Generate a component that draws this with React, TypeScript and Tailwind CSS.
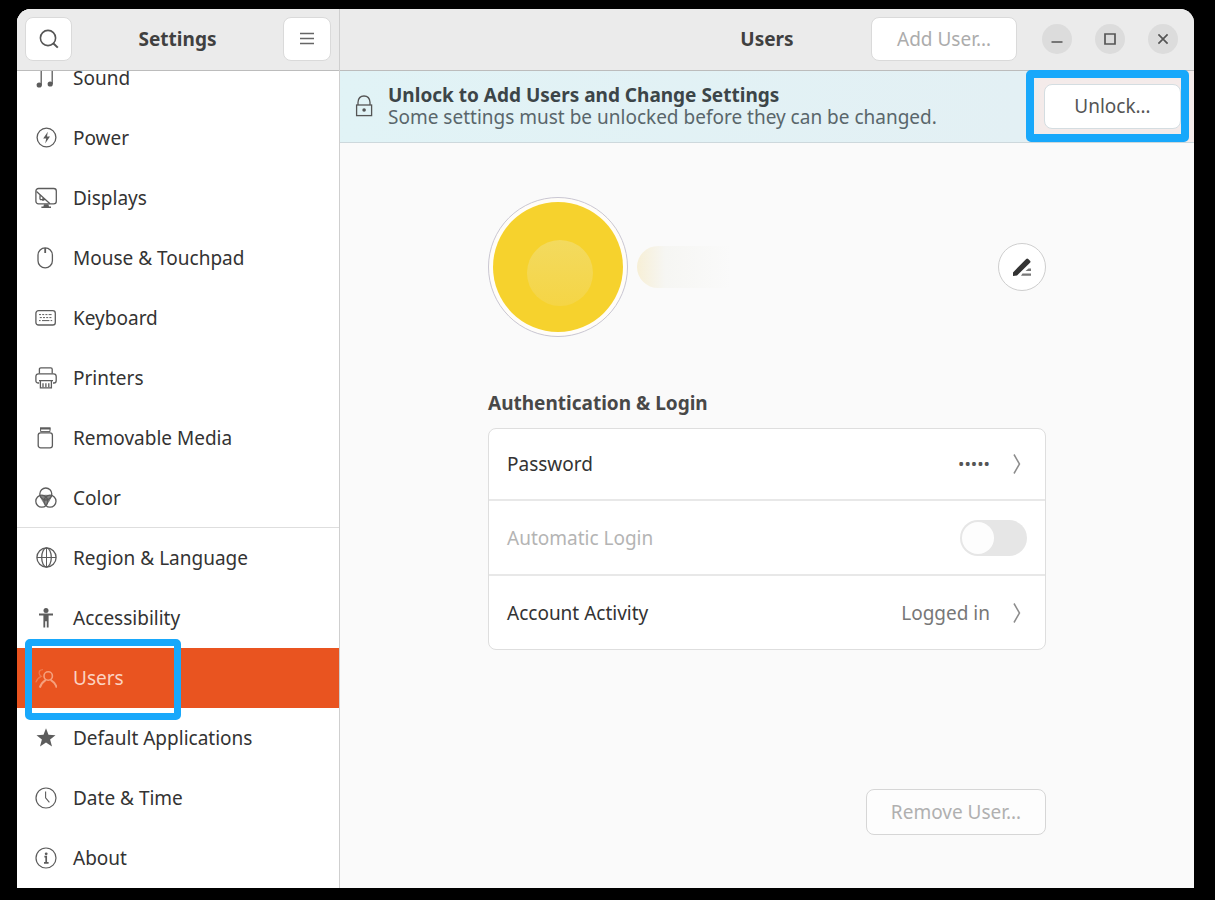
import type { ReactNode } from "react";

function Icon({ children, className = "" }: { children: ReactNode; className?: string }) {
  return (
    <svg
      viewBox="0 0 22 22"
      className={`size-[22px] shrink-0 ${className}`}
      fill="none"
      stroke="currentColor"
      strokeWidth="1.3"
      aria-hidden="true"
    >
      {children}
    </svg>
  );
}

const icons: Record<string, ReactNode> = {
  sound: (
    <>
      <path d="M6.2 18.5V3h11v14" />
      <circle cx="4.2" cy="18" r="2.6" fill="currentColor" stroke="none" />
      <circle cx="15.2" cy="17" r="2.6" fill="currentColor" stroke="none" />
    </>
  ),
  power: (
    <>
      <circle cx="11.5" cy="10.5" r="9.4" />
      <path d="M12.8 4.8 8.2 11.4h3l-1 5 4.8-6.8h-3z" fill="currentColor" stroke="none" />
    </>
  ),
  displays: (
    <>
      <rect x="0.9" y="1.5" width="20.4" height="15.4" rx="2.6" />
      <path d="M1.5 4.5 15 16.8M5 8.2v4.2M5 12.6h5M8 11v3" />
      <path d="M9 17.2h4.4l.6 2.2h2v1.6H6.4v-1.6h2z" fill="currentColor" stroke="none" />
    </>
  ),
  mouse: (
    <>
      <rect x="3" y="0.9" width="14.4" height="20" rx="7.2" />
      <path d="M10.2 1v5" strokeWidth="1.8" />
    </>
  ),
  keyboard: (
    <>
      <rect x="0.9" y="3.6" width="19.4" height="14.4" rx="2.6" />
      <path d="M4 7.6h2M7.2 7.6h2M10.4 7.6h2M13.6 7.6h3M4.8 10.6h2M8 10.6h2M11.2 10.6h2M14.4 10.6h2M4 13.6h1.6M7 13.6h7.4M15.6 13.6h1.6" strokeWidth="1" />
    </>
  ),
  printers: (
    <>
      <path d="M4.4 6.6V2.2Q4.4.9 5.8.9h10Q17.2.9 17.2 2.2v4.4" />
      <path d="M4.2 16H3.4Q.9 16 .9 13.4V9.6Q.9 6.8 3.6 6.8h15q2.6 0 2.6 2.8v3.8q0 2.6-2.4 2.6H18" />
      <path d="M4 13.6h14M5.4 14v6.8h11V14" />
      <path d="M8 16.2v4M10.9 16.2v4M13.8 16.2v4" />
    </>
  ),
  removable: (
    <>
      <path d="M5.6 1.4h9.4v3.2H5.6z" strokeWidth="1" />
      <path d="M5 1.4h10.6" strokeWidth="2.2" />
      <rect x="3.2" y="5.8" width="14.2" height="15" rx="2.4" />
    </>
  ),
  color: (
    <>
      <circle cx="10.8" cy="7" r="6" />
      <circle cx="6.8" cy="14.2" r="6" />
      <circle cx="15" cy="14.2" r="6" />
      <path d="M5.2 8.6q5.6-1.6 11.4 0-.6 5.4-5.7 9.4-5-3.6-5.7-9.4z" fill="currentColor" fillOpacity="0.75" stroke="none" />
    </>
  ),
  region: (
    <>
      <circle cx="11.5" cy="10.5" r="9.6" />
      <ellipse cx="11.5" cy="10.5" rx="4.8" ry="9.6" />
      <path d="M2 10.5h19M11.5 1v19" strokeWidth="1" />
    </>
  ),
  accessibility: (
    <g fill="currentColor" stroke="none">
      <circle cx="11" cy="3.4" r="2.5" />
      <path d="M4 6.6h14v2h-4.4v12h-1.8v-6.4h-1.6v6.4H8.4v-12H4z" />
    </g>
  ),
  users: (
    <>
      <circle cx="13.2" cy="9" r="4.2" strokeWidth="1.6" />
      <path d="M4.8 20.6q1.6-5 6-7.8M21.8 20.6q-1.6-5-6.2-7.8" strokeWidth="2" />
      <path d="M8 2.6Q3.6 3 4.2 6.4q.4 2 2 3Q2.4 11 .8 15.4" strokeOpacity="0.5" />
    </>
  ),
  star: (
    <path
      d="m11 1.2 2.5 6.6 7 .4-5.4 4.4 1.9 6.8L11 15.6l-6 3.8 1.9-6.8L1.5 8.2l7-.4z"
      fill="currentColor"
      stroke="none"
    />
  ),
  clock: (
    <>
      <circle cx="11" cy="11" r="10" strokeWidth="1.2" />
      <path d="M10.6 4.6v6.2l3.8 4.6" strokeWidth="1.1" />
    </>
  ),
  about: (
    <>
      <circle cx="11" cy="11" r="10" strokeWidth="1.2" />
      <circle cx="11.2" cy="6.8" r="1.4" fill="currentColor" stroke="none" />
      <path d="M9.4 9.6h1.8v6.2M9 15.8h4.6" strokeWidth="1.7" />
    </>
  ),
};

const items = [
  { label: "Sound", icon: "sound" },
  { label: "Power", icon: "power" },
  { label: "Displays", icon: "displays" },
  { label: "Mouse & Touchpad", icon: "mouse" },
  { label: "Keyboard", icon: "keyboard" },
  { label: "Printers", icon: "printers" },
  { label: "Removable Media", icon: "removable" },
  { label: "Color", icon: "color", divider: true },
  { label: "Region & Language", icon: "region" },
  { label: "Accessibility", icon: "accessibility" },
  { label: "Users", icon: "users", active: true },
  { label: "Default Applications", icon: "star" },
  { label: "Date & Time", icon: "clock" },
  { label: "About", icon: "about" },
];

function Sidebar() {
  return (
    <aside className="flex w-[323px] shrink-0 flex-col border-r border-[#cfcfcf] bg-white">
      <header className="flex h-[62px] shrink-0 items-center justify-between border-b border-[#bcbcbc] bg-[#ebebeb] px-2 pb-0.5">
        <button aria-label="Search" className="flex h-11 w-[47px] items-center justify-center rounded-lg border border-[#dadada] bg-white text-[#555]">
          <Icon>
            <circle cx="10" cy="10" r="7.6" strokeWidth="1.6" />
            <path d="m15.2 15.2 4.6 4.4" strokeWidth="2" />
          </Icon>
        </button>
        <h1 className="font-bold text-[#404040]">Settings</h1>
        <button aria-label="Menu" className="flex h-11 w-12 items-center justify-center rounded-lg border border-[#dadada] bg-white text-[#666]">
          <Icon>
            <path d="M4 5.5h14M4 10.5h14M4 15.5h14" strokeWidth="1.6" />
          </Icon>
        </button>
      </header>
      <nav className="flex min-h-0 grow flex-col justify-end overflow-hidden">
        <ul>
          {items.map((item) => (
            <li key={item.label} className={`relative ${item.divider ? "border-b border-[#dedede]" : ""}`}>
              <a
                href={`#${item.icon}`}
                aria-current={item.active ? "page" : undefined}
                className={`flex items-center gap-4 px-[18px] ${item.divider ? "h-[59px]" : "h-[60px]"} ${
                  item.active ? "bg-[#e95420] text-[#fbd3c2]" : "text-[#333]"
                }`}
              >
                <Icon className={item.active ? "text-[#f5a17e]" : "text-[#5c5c5c]"}>{icons[item.icon]}</Icon>
                {item.label}
              </a>
              {item.active && (
                <div className="pointer-events-none absolute -top-[9px] left-2 z-10 h-[81px] w-[156px] rounded-[5px] border-[7px] border-[#18a8fb]" />
              )}
            </li>
          ))}
        </ul>
      </nav>
    </aside>
  );
}

function WindowButton({ label, children }: { label: string; children: ReactNode }) {
  return (
    <button aria-label={label} className="flex size-[30px] items-center justify-center rounded-full bg-[#dcdcdc] text-[#555]">
      <svg viewBox="0 0 16 16" className="size-4" fill="none" stroke="currentColor" strokeWidth="1.7" aria-hidden="true">
        {children}
      </svg>
    </button>
  );
}

function Chevron() {
  return (
    <svg viewBox="0 0 10 22" className="h-[22px] w-[10px]" fill="none" stroke="#8c8c8c" strokeWidth="1.5" aria-hidden="true">
      <path d="m2 1.5 5.5 9.5L2 20.5" />
    </svg>
  );
}

export default function App() {
  return (
    <div className="h-screen bg-black pt-[9px] pr-[21px] pb-3 pl-[17px] font-['Noto_Sans','Open_Sans',sans-serif] text-[19px] leading-[22px] text-[#333]">
      <div className="flex h-full overflow-hidden rounded-t-[14px] bg-[#fafafa]">
        <Sidebar />
        <main className="flex min-w-0 grow flex-col">
          <header className="grid h-[62px] shrink-0 grid-cols-[1fr_auto_1fr] items-center border-b border-[#bcbcbc] bg-[#ebebeb] pr-4 pb-0.5">
            <h2 className="col-start-2 pl-4 font-bold text-[#404040]">Users</h2>
            <div className="flex items-center justify-end gap-[25px]">
              <button disabled className="h-11 w-[146px] rounded-lg border border-[#dadada] bg-white text-[#acacac]">
                Add User…
              </button>
              <div className="flex gap-[23px]">
                <WindowButton label="Minimize">
                  <path d="M2.5 11h11" />
                </WindowButton>
                <WindowButton label="Maximize">
                  <path d="M3 3h10v10H3z" />
                </WindowButton>
                <WindowButton label="Close">
                  <path d="m3.4 3.4 9.2 9.2M12.6 3.4l-9.2 9.2" />
                </WindowButton>
              </div>
            </div>
          </header>

          <section className="relative flex h-[72px] shrink-0 items-center border-b border-[#cdd8dc] bg-linear-to-r from-[#e1f3f6] from-0% via-[#e3f0f4] via-80% to-[#f4ebea] to-82% pr-[13px] pb-px pl-[13px]">
            <Icon className="text-[#555]">
              <rect x="3.6" y="10" width="15" height="10.6" />
              <path d="M5 10V7.2Q5.4 1 11 1t6 6.2V10" />
              <circle cx="11.1" cy="15" r="1.8" fill="currentColor" stroke="none" />
            </Icon>
            <div className="ml-[13px] grow">
              <p className="font-bold text-[#3c4548]">Unlock to Add Users and Change Settings</p>
              <p className="text-[#59666b]">Some settings must be unlocked before they can be changed.</p>
            </div>
            <button className="h-[45px] w-[137px] rounded-lg border border-[#d4dde1] bg-white text-[#555]">Unlock…</button>
            <div className="pointer-events-none absolute -top-px right-[5px] h-[72px] w-[163px] rounded-[5px] border-8 border-[#18a8fb]" />
          </section>

          <div className="mx-auto flex min-h-0 w-full max-w-[558px] grow flex-col pt-[54px] pb-[53px]">
            <div className="flex items-center">
              <div className="flex size-[140px] items-center justify-center rounded-full border border-[#c9c6d2] bg-[#fffdf8]">
                <div className="flex size-[130px] items-center justify-center rounded-full bg-[#f6d22d] pt-3 pl-1">
                  <div className="size-[66px] rounded-full bg-linear-to-b from-[#f3da5e] to-[#f5d545]" />
                </div>
              </div>
              <div className="ml-[9px] h-[42px] w-[94px] rounded-l-full bg-linear-to-r from-[#f7efd6] via-[#f6f6f3] via-30% to-[#fafafa]" />
              <button aria-label="Edit name" className="ml-auto flex size-12 items-center justify-center rounded-full border border-[#cecece] bg-white text-[#333]">
                <svg viewBox="0 0 20 20" className="size-5" aria-hidden="true">
                  <path d="M1 19v-3.6L14.2 2q1-1 2 0l1.8 1.8q1 1 0 2L5 18.4z" fill="currentColor" />
                  <path d="m16.5 11.5-3 2.6H19v-2.6zM10.5 16.6H19v2.2H9z" fill="#777" />
                </svg>
              </button>
            </div>

            <h3 className="mt-[55px] font-bold text-[#484848]">Authentication &amp; Login</h3>
            <div className="mt-[14px] divide-y-2 divide-[#e8e8e8] rounded-lg border border-[#dedede] bg-white">
              <a href="#password" className="flex h-[72px] items-center justify-between pr-[23px] pl-[18px]">
                Password
                <span className="flex items-center gap-[22px] text-[17px] text-[#555]">
                  •••••
                  <Chevron />
                </span>
              </a>
              <label className="flex h-[75px] items-center justify-between pr-[18px] pl-[18px] text-[#b4b4b4]">
                Automatic Login
                <input
                  type="checkbox"
                  disabled
                  className="h-9 w-[67px] appearance-none rounded-full bg-[#e6e6e6] p-0.5 before:block before:size-8 before:rounded-full before:bg-[#fdfdfd]"
                />
              </label>
              <a href="#activity" className="flex h-[73px] items-center justify-between pr-[23px] pl-[18px]">
                Account Activity
                <span className="flex items-center gap-[22px] text-[#777]">
                  Logged in
                  <Chevron />
                </span>
              </a>
            </div>

            <button disabled className="mt-auto h-[46px] w-[180px] shrink-0 self-end rounded-lg border border-[#d6d6d6] bg-[#fdfdfd] text-[#b0b0b0]">
              Remove User…
            </button>
          </div>
        </main>
      </div>
    </div>
  );
}
